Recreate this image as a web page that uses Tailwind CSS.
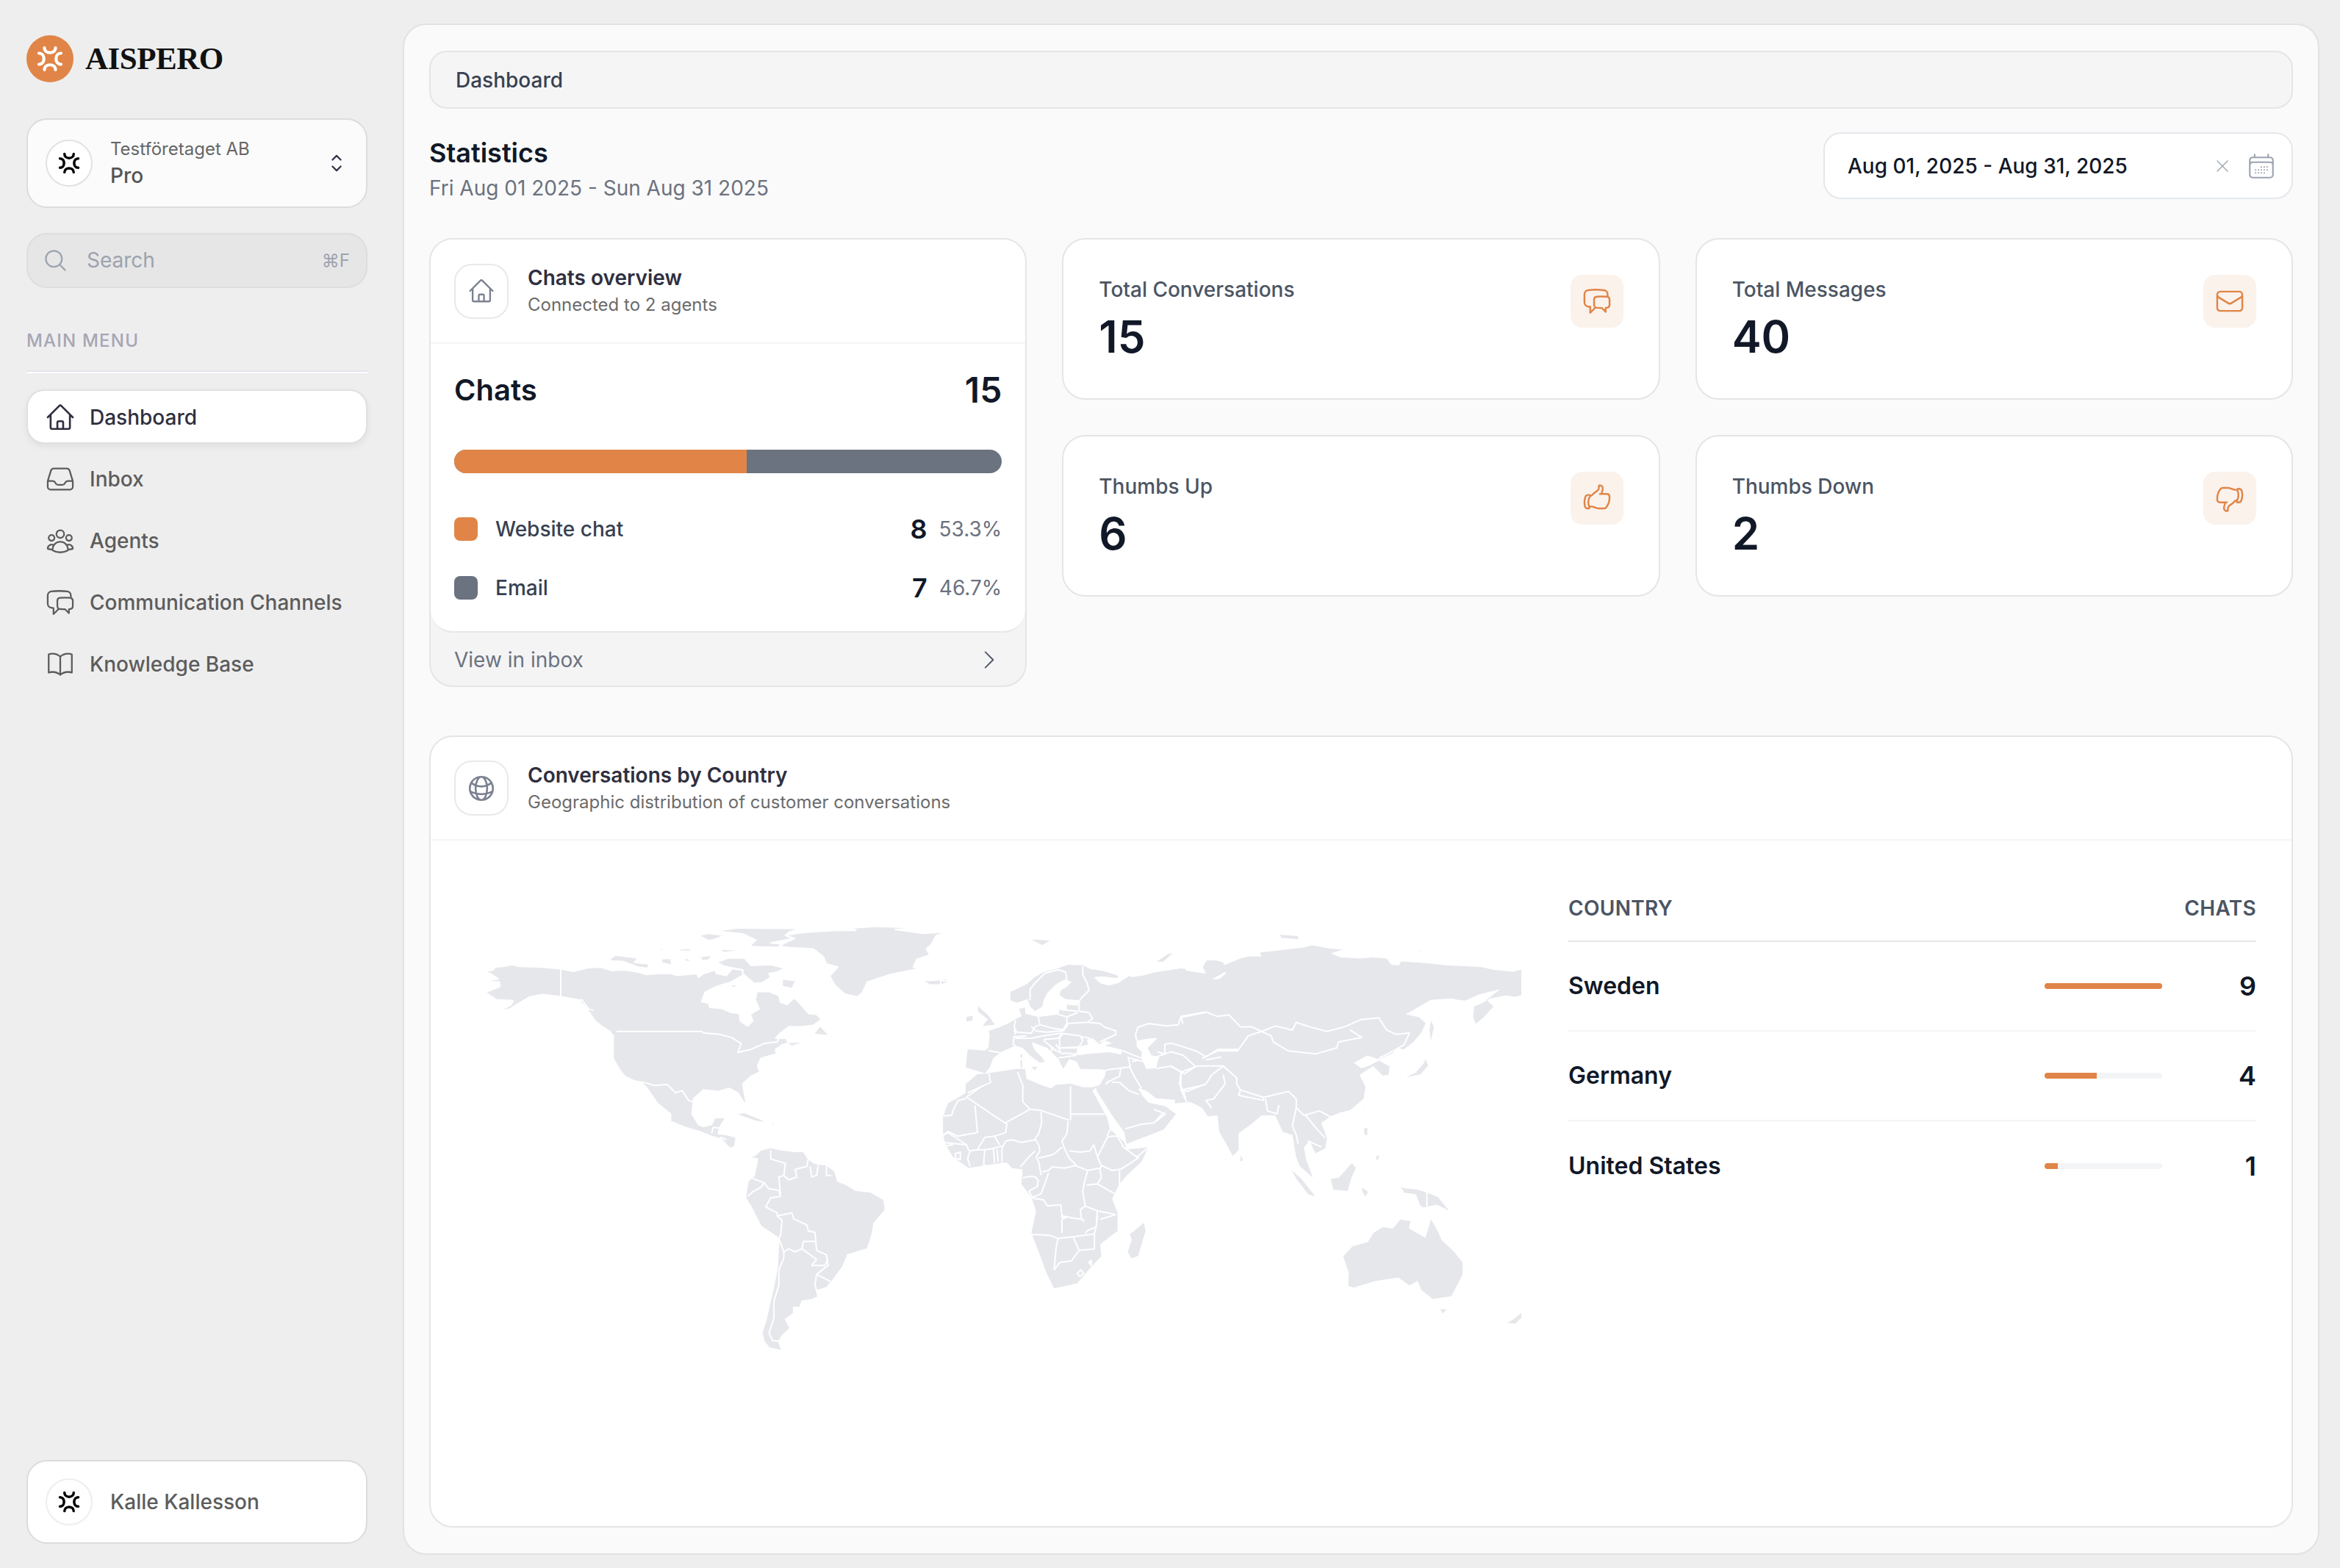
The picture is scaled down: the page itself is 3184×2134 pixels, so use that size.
<!DOCTYPE html>
<html lang="en">
<head>
  <meta charset="UTF-8" />
  <title>Aispero - Dashboard</title>
  <script src="https://cdn.jsdelivr.net/npm/@tailwindcss/browser@4"></script>
</head>
<body class="bg-[#eeeeee] font-['Inter',sans-serif] h-[2134px] flex overflow-hidden">

  <svg class="hidden">
    <symbol id="mark" viewBox="0 0 24 24"><path d="M7 2C7 8 17 8 17 2M7 22C7 16 17 16 17 22M2 7C8 7 8 17 2 17M22 7C16 7 16 17 22 17" fill="none" stroke-width="2.8" stroke-linecap="round"/></symbol>
    <symbol id="home" viewBox="0 0 24 24"><path d="m2.25 12 8.954-8.955c.44-.439 1.152-.439 1.591 0L21.75 12M4.5 9.75v10.125c0 .621.504 1.125 1.125 1.125H9.75v-4.875c0-.621.504-1.125 1.125-1.125h2.25c.621 0 1.125.504 1.125 1.125V21h4.125c.621 0 1.125-.504 1.125-1.125V9.75M8.25 21h8.25" fill="none" stroke-linecap="round" stroke-linejoin="round"/></symbol>
    <symbol id="chats" viewBox="0 0 24 24"><path d="M20.25 8.511c.884.284 1.5 1.128 1.5 2.097v4.286c0 1.136-.847 2.1-1.98 2.193-.34.027-.68.052-1.02.072v3.091l-3-3c-1.354 0-2.694-.055-4.02-.163a2.115 2.115 0 0 1-.825-.242m9.345-8.334a2.126 2.126 0 0 0-.476-.095 48.64 48.64 0 0 0-8.048 0c-1.131.094-1.976 1.057-1.976 2.192v4.286c0 .837.46 1.58 1.155 1.951m9.345-8.334V6.637c0-1.621-1.152-3.026-2.76-3.235A48.455 48.455 0 0 0 11.25 3c-2.115 0-4.198.137-6.24.402-1.608.209-2.76 1.614-2.76 3.235v6.226c0 1.621 1.152 3.026 2.76 3.235.577.075 1.157.14 1.74.194V21l4.155-4.155" fill="none" stroke-linecap="round" stroke-linejoin="round"/></symbol>
  </svg>

  <!-- sidebar -->
  <aside class="w-[548px] shrink-0 pl-[36px] pr-[48px] pt-[48px] pb-[33px] flex flex-col">
    <div class="flex items-center gap-[16px] h-[64px]">
      <div class="w-[64px] h-[64px] rounded-full bg-[#e08547] flex items-center justify-center">
        <svg class="w-[36px] h-[36px] stroke-white"><use href="#mark"/></svg>
      </div>
      <span class="font-['Liberation_Serif',serif] font-bold text-[43px] tracking-[-.5px] text-[#111111]">AISPERO</span>
    </div>

    <div class="mt-[49px] h-[122px] rounded-[28px] border-2 border-[#dcdcdc] bg-[#fbfbfb] flex items-center pl-[24px] pr-[22px]">
      <div class="w-[64px] h-[64px] rounded-full bg-white border-2 border-[#e2e2e2] flex items-center justify-center">
        <svg class="w-[30px] h-[30px] stroke-black"><use href="#mark"/></svg>
      </div>
      <div class="ml-[24px] flex-1 -mt-[2px]">
        <div class="text-[24px] leading-[36px] text-[#666666]">Testföretaget AB</div>
        <div class="text-[28px] leading-[37px] text-[#555555] font-medium">Pro</div>
      </div>
      <svg class="w-[36px] h-[36px] stroke-[#33334a]" viewBox="0 0 24 24" fill="none" stroke-width="1.5" stroke-linecap="round" stroke-linejoin="round"><path d="M8.25 15 12 18.75 15.75 15m-7.5-6L12 5.25 15.75 9"/></svg>
    </div>

    <div class="mt-[34px] h-[75px] rounded-[28px] border-2 border-[#dddddd] bg-[#e6e6e6] flex items-center pl-[20px] pr-[22px]">
      <svg class="w-[35px] h-[35px] stroke-[#9ca3af]" viewBox="0 0 24 24" fill="none" stroke-width="1.5" stroke-linecap="round" stroke-linejoin="round"><path d="m21 21-5.197-5.197m0 0A7.5 7.5 0 1 0 5.196 5.196a7.5 7.5 0 0 0 10.607 10.607Z"/></svg>
      <span class="ml-[25px] flex-1 text-[28px] leading-[36px] -mt-[1px] text-[#9ca3af]">Search</span>
      <span class="text-[24px] text-[#9ca3af]">⌘F</span>
    </div>

    <div class="mt-[56px] text-[24px] leading-[32px] font-medium tracking-[1.2px] text-[#a6a6b4]">MAIN MENU</div>
    <div class="mt-[24px] h-[4px] border-t-2 border-b-2 border-t-[#e3e3ea] border-b-white"></div>

    <nav class="mt-[22px] flex flex-col gap-[10px] text-[28px] font-medium text-[#5c5c5c]">
      <a class="h-[74px] rounded-[24px] border-2 border-[#e0e0e0] bg-white shadow-[0_4px_10px_rgba(0,0,0,0.06)] flex items-center pl-[23px] pt-[1px] gap-[19px] text-[#2f2f40]">
        <svg class="w-[42px] h-[42px] stroke-[#2f2f40]" stroke-width="1.5"><use href="#home"/></svg>
        Dashboard
      </a>
      <a class="h-[74px] border-2 border-transparent flex items-center pl-[23px] pt-[1px] gap-[19px]">
        <svg class="w-[42px] h-[42px] stroke-[#5c5c5c]" viewBox="0 0 24 24" fill="none" stroke-width="1.3" stroke-linecap="round" stroke-linejoin="round"><path d="M2.25 13.5h3.86a2.25 2.25 0 0 1 2.012 1.244l.256.512a2.25 2.25 0 0 0 2.013 1.244h3.218a2.25 2.25 0 0 0 2.013-1.244l.256-.512a2.25 2.25 0 0 1 2.013-1.244h3.859m-19.5.338V18a2.25 2.25 0 0 0 2.25 2.25h15A2.25 2.25 0 0 0 21.75 18v-4.162c0-.224-.034-.447-.1-.661L19.24 5.338a2.25 2.25 0 0 0-2.15-1.588H6.911a2.25 2.25 0 0 0-2.15 1.588L2.35 13.177a2.25 2.25 0 0 0-.1.661Z"/></svg>
        Inbox
      </a>
      <a class="h-[74px] border-2 border-transparent flex items-center pl-[23px] pt-[1px] gap-[19px]">
        <svg class="w-[42px] h-[42px] stroke-[#5c5c5c]" viewBox="0 0 24 24" fill="none" stroke-width="1.3" stroke-linecap="round" stroke-linejoin="round"><path d="M18 18.72a9.094 9.094 0 0 0 3.741-.479 3 3 0 0 0-4.682-2.72m.94 3.198.001.031c0 .225-.012.447-.037.666A11.944 11.944 0 0 1 12 21c-2.17 0-4.207-.576-5.963-1.584A6.062 6.062 0 0 1 6 18.719m12 0a5.971 5.971 0 0 0-.941-3.197m0 0A5.995 5.995 0 0 0 12 12.75a5.995 5.995 0 0 0-5.058 2.772m0 0a3 3 0 0 0-4.681 2.72 8.986 8.986 0 0 0 3.74.477m.94-3.197a5.971 5.971 0 0 0-.94 3.197M15 6.75a3 3 0 1 1-6 0 3 3 0 0 1 6 0Zm6 3a2.25 2.25 0 1 1-4.5 0 2.25 2.25 0 0 1 4.5 0Zm-13.5 0a2.25 2.25 0 1 1-4.5 0 2.25 2.25 0 0 1 4.5 0Z"/></svg>
        Agents
      </a>
      <a class="h-[74px] border-2 border-transparent flex items-center pl-[23px] pt-[1px] gap-[19px]">
        <svg class="w-[42px] h-[42px] stroke-[#5c5c5c]" stroke-width="1.3"><use href="#chats"/></svg>
        Communication Channels
      </a>
      <a class="h-[74px] border-2 border-transparent flex items-center pl-[23px] pt-[1px] gap-[19px]">
        <svg class="w-[42px] h-[42px] stroke-[#5c5c5c]" viewBox="0 0 24 24" fill="none" stroke-width="1.3" stroke-linecap="round" stroke-linejoin="round"><path d="M12 6.042A8.967 8.967 0 0 0 6 3.75c-1.052 0-2.062.18-3 .512v14.25A8.987 8.987 0 0 1 6 18c2.305 0 4.408.867 6 2.292m0-14.25a8.966 8.966 0 0 1 6-2.292c1.052 0 2.062.18 3 .512v14.25A8.987 8.987 0 0 0 18 18a8.967 8.967 0 0 0-6 2.292m0-14.25v14.25"/></svg>
        Knowledge Base
      </a>
    </nav>

    <div class="mt-auto h-[114px] rounded-[28px] border-2 border-[#dcdcdc] bg-white flex items-center pl-[24px]">
      <div class="w-[64px] h-[64px] rounded-full bg-white border-2 border-[#eeeeee] flex items-center justify-center">
        <svg class="w-[30px] h-[30px] stroke-black"><use href="#mark"/></svg>
      </div>
      <span class="ml-[24px] text-[28px] font-medium text-[#5c5c5c]">Kalle Kallesson</span>
    </div>
  </aside>

  <!-- main panel -->
  <main class="flex-1 mr-[28px] mt-[32px] mb-[18px] rounded-[32px] border-2 border-[#e2e2e2] bg-[#fafafa] px-[34px] pt-[35px] pb-[35px] flex flex-col">
    <div class="h-[79px] shrink-0 rounded-[24px] border-2 border-[#e5e5e5] bg-[#f5f5f5] flex items-center pl-[34px] text-[28px] font-medium text-[#374151]">Dashboard</div>

    <div class="mt-[32px] h-[91px] shrink-0 flex justify-between">
      <div class="pt-[4px]">
        <h1 class="text-[36px] leading-[48px] font-semibold text-[#111827]">Statistics</h1>
        <p class="mt-[4px] text-[28px] leading-[40px] text-[#6b7280]">Fri Aug 01 2025 - Sun Aug 31 2025</p>
      </div>
      <div class="w-[639px] rounded-[24px] border-2 border-[#e5e7eb] bg-white flex items-center pl-[31px] pr-[20px]">
        <span class="flex-1 text-[28px] font-medium text-[#111827]">Aug 01, 2025 - Aug 31, 2025</span>
        <svg class="w-[28px] h-[28px] stroke-[#9ca3af]" viewBox="0 0 24 24" fill="none" stroke-width="1.2" stroke-linecap="round"><path d="M6 18 18 6M6 6l12 12"/></svg>
        <svg class="ml-[18px] w-[42px] h-[42px] stroke-[#9ca3af]" viewBox="0 0 24 24" fill="none" stroke-width="1.2" stroke-linecap="round" stroke-linejoin="round"><path d="M6.75 3v2.25M17.25 3v2.25M3 18.75V7.5a2.25 2.25 0 0 1 2.25-2.25h13.5A2.25 2.25 0 0 1 21 7.5v11.25m-18 0A2.25 2.25 0 0 0 5.25 21h13.5A2.25 2.25 0 0 0 21 18.75m-18 0v-7.5A2.25 2.25 0 0 1 5.25 9h13.5A2.25 2.25 0 0 1 21 11.25v7.5m-9-6h.008v.008H12v-.008ZM12 15h.008v.008H12V15Zm0 2.25h.008v.008H12v-.008ZM9.75 15h.008v.008H9.75V15Zm0 2.25h.008v.008H9.75v-.008ZM7.5 15h.008v.008H7.5V15Zm0 2.25h.008v.008H7.5v-.008Zm6.75-4.5h.008v.008h-.008v-.008Zm0 2.25h.008v.008h-.008V15Zm0 2.25h.008v.008h-.008v-.008Zm2.25-4.5h.008v.008H16.5v-.008Zm0 2.25h.008v.008H16.5V15Z"/></svg>
      </div>
    </div>

    <div class="mt-[53px] shrink-0 grid grid-cols-3 gap-x-[48px]">
      <!-- chats overview -->
      <section class="rounded-[32px] border-2 border-[#e5e5e5] bg-[#f4f4f5] flex flex-col">
        <div class="rounded-[30px] bg-white border-b-2 border-[#e5e7eb]">
          <div class="h-[142px] border-b-2 border-[#f5f5f5] px-[32px] flex items-center gap-[26px]">
            <div class="w-[74px] h-[75px] rounded-[24px] border-2 border-[#e9e9e9] flex items-center justify-center">
              <svg class="w-[38px] h-[38px] stroke-[#7b8190]" stroke-width="1.5"><use href="#home"/></svg>
            </div>
            <div>
              <div class="text-[28px] leading-[38px] font-semibold text-[#2f2f40]">Chats overview</div>
              <div class="text-[24px] leading-[36px] text-[#6b6b6b]">Connected to 2 agents</div>
            </div>
          </div>
          <div class="px-[32px] pt-[33px] pb-[35px]">
            <div class="flex items-center justify-between h-[60px] text-[#111827] font-semibold">
              <span class="text-[40px]">Chats</span>
              <span class="text-[48px]">15</span>
            </div>
            <div class="mt-[51px] h-[32px] rounded-full overflow-hidden flex bg-[#6b7280]">
              <div class="bg-[#e08547]" style="width: 53.4%"></div>
            </div>
            <div class="mt-[52px] flex flex-col gap-[32px]">
              <div class="h-[48px] flex items-center">
                <span class="w-[32px] h-[32px] rounded-[8px] bg-[#e08547]"></span>
                <span class="ml-[24px] flex-1 text-[28px] font-medium text-[#374151]">Website chat</span>
                <span class="text-[36px] font-semibold text-[#111827]">8</span>
                <span class="ml-[16px] text-[28px] text-[#6b7280]">53.3%</span>
              </div>
              <div class="h-[48px] flex items-center">
                <span class="w-[32px] h-[32px] rounded-[8px] bg-[#6b7280]"></span>
                <span class="ml-[24px] flex-1 text-[28px] font-medium text-[#374151]">Email</span>
                <span class="text-[36px] font-semibold text-[#111827]">7</span>
                <span class="ml-[16px] text-[28px] text-[#6b7280]">46.7%</span>
              </div>
            </div>
          </div>
        </div>
        <div class="h-[72px] pt-[1px] px-[32px] flex items-center justify-between text-[28px] text-[#6b7280]">
          View in inbox
          <svg class="w-[34px] h-[34px] stroke-[#4b5563]" viewBox="0 0 24 24" fill="none" stroke-width="1.3" stroke-linecap="round" stroke-linejoin="round"><path d="m8.25 4.5 7.5 7.5-7.5 7.5"/></svg>
        </div>
      </section>

      <!-- stat cards -->
      <div class="col-span-2 grid grid-cols-2 gap-x-[48px] gap-y-[48px] content-start">
        <div class="h-[220px] rounded-[32px] border-2 border-[#e5e5e5] bg-white p-[48px] flex justify-between">
          <div>
            <div class="text-[28px] leading-[40px] font-medium text-[#4b5563]">Total Conversations</div>
            <div class="mt-[12px] text-[60px] leading-[64px] font-semibold text-[#111827]">15</div>
          </div>
          <div class="w-[72px] h-[72px] rounded-[16px] bg-[#fbf2ec] flex items-center justify-center">
            <svg class="w-[42px] h-[42px] stroke-[#e08547]" stroke-width="1.4"><use href="#chats"/></svg>
          </div>
        </div>
        <div class="h-[220px] rounded-[32px] border-2 border-[#e5e5e5] bg-white p-[48px] flex justify-between">
          <div>
            <div class="text-[28px] leading-[40px] font-medium text-[#4b5563]">Total Messages</div>
            <div class="mt-[12px] text-[60px] leading-[64px] font-semibold text-[#111827]">40</div>
          </div>
          <div class="w-[72px] h-[72px] rounded-[16px] bg-[#fbf2ec] flex items-center justify-center">
            <svg class="w-[42px] h-[42px] stroke-[#e08547]" viewBox="0 0 24 24" fill="none" stroke-width="1.4" stroke-linecap="round" stroke-linejoin="round"><path d="M21.75 6.75v10.5a2.25 2.25 0 0 1-2.25 2.25h-15a2.25 2.25 0 0 1-2.25-2.25V6.75m19.5 0A2.25 2.25 0 0 0 19.5 4.5h-15a2.25 2.25 0 0 0-2.25 2.25m19.5 0v.243a2.25 2.25 0 0 1-1.07 1.916l-7.5 4.615a2.25 2.25 0 0 1-2.36 0L3.32 8.91a2.25 2.25 0 0 1-1.07-1.916V6.75"/></svg>
          </div>
        </div>
        <div class="h-[220px] rounded-[32px] border-2 border-[#e5e5e5] bg-white p-[48px] flex justify-between">
          <div>
            <div class="text-[28px] leading-[40px] font-medium text-[#4b5563]">Thumbs Up</div>
            <div class="mt-[12px] text-[60px] leading-[64px] font-semibold text-[#111827]">6</div>
          </div>
          <div class="w-[72px] h-[72px] rounded-[16px] bg-[#fbf2ec] flex items-center justify-center">
            <svg class="w-[42px] h-[42px] stroke-[#e08547]" viewBox="0 0 24 24" fill="none" stroke-width="1.4" stroke-linecap="round" stroke-linejoin="round"><path d="M6.633 10.25c.806 0 1.533-.446 2.031-1.08a9.041 9.041 0 0 1 2.861-2.4c.723-.384 1.35-.956 1.653-1.715a4.498 4.498 0 0 0 .322-1.672V2.75a.75.75 0 0 1 .75-.75 2.25 2.25 0 0 1 2.25 2.25c0 1.152-.26 2.243-.723 3.218-.266.558.107 1.282.725 1.282m0 0h3.126c1.026 0 1.945.694 2.054 1.715.045.422.068.85.068 1.285a11.95 11.95 0 0 1-2.649 7.521c-.388.482-.987.729-1.605.729H13.48c-.483 0-.964-.078-1.423-.23l-3.114-1.04a4.501 4.501 0 0 0-1.423-.23H5.904m10.598-9.75H14.25M5.904 18.5c.083.205.173.405.27.602.197.4-.078.898-.523.898h-.908c-.889 0-1.713-.518-1.972-1.368a12 12 0 0 1-.521-3.507c0-1.553.295-3.036.831-4.398C3.387 9.953 4.167 9.5 5 9.5h1.053c.472 0 .745.556.5.96a8.958 8.958 0 0 0-1.302 4.665c0 1.194.232 2.333.654 3.375Z"/></svg>
          </div>
        </div>
        <div class="h-[220px] rounded-[32px] border-2 border-[#e5e5e5] bg-white p-[48px] flex justify-between">
          <div>
            <div class="text-[28px] leading-[40px] font-medium text-[#4b5563]">Thumbs Down</div>
            <div class="mt-[12px] text-[60px] leading-[64px] font-semibold text-[#111827]">2</div>
          </div>
          <div class="w-[72px] h-[72px] rounded-[16px] bg-[#fbf2ec] flex items-center justify-center">
            <svg class="w-[42px] h-[42px] stroke-[#e08547]" viewBox="0 0 24 24" fill="none" stroke-width="1.4" stroke-linecap="round" stroke-linejoin="round"><path d="M7.498 15.25H4.372c-1.026 0-1.945-.694-2.054-1.715a12.137 12.137 0 0 1-.068-1.285c0-2.848.992-5.464 2.649-7.521C5.287 4.247 5.886 4 6.504 4h4.016a4.5 4.5 0 0 1 1.423.23l3.114 1.04a4.5 4.5 0 0 0 1.423.23h1.294M7.498 15.25c.618 0 .991.724.725 1.282A7.471 7.471 0 0 0 7.5 19.75 2.25 2.25 0 0 0 9.75 22a.75.75 0 0 0 .75-.75v-.633c0-.573.11-1.14.322-1.672.304-.76.93-1.33 1.653-1.715a9.04 9.04 0 0 0 2.86-2.4c.498-.634 1.226-1.08 2.032-1.08h.384m-10.253 1.5H9.7m8.075-9.75c.01.05.027.1.05.148.593 1.2.925 2.55.925 3.977 0 1.487-.36 2.89-.999 4.125m.023-8.25c-.076-.365.183-.75.575-.75h.908c.889 0 1.713.518 1.972 1.368.339 1.11.521 2.287.521 3.507 0 1.553-.295 3.036-.831 4.398-.306.774-1.086 1.227-1.918 1.227h-1.053c-.472 0-.745-.556-.5-.96a8.95 8.95 0 0 0 .303-.54"/></svg>
          </div>
        </div>
      </div>
    </div>

    <!-- conversations by country -->
    <section class="mt-[66px] flex-1 rounded-[32px] border-2 border-[#e5e5e5] bg-white flex flex-col min-h-0">
      <div class="h-[141px] shrink-0 border-b-2 border-[#f5f5f5] px-[32px] flex items-center gap-[26px]">
        <div class="w-[74px] h-[75px] rounded-[24px] border-2 border-[#e9e9e9] flex items-center justify-center">
          <svg class="w-[42px] h-[42px] stroke-[#7b8190]" viewBox="0 0 24 24" fill="none" stroke-width="1.5" stroke-linecap="round" stroke-linejoin="round"><path d="M12 21a9.004 9.004 0 0 0 8.716-6.747M12 21a9.004 9.004 0 0 1-8.716-6.747M12 21c2.485 0 4.5-4.03 4.5-9S14.485 3 12 3m0 18c-2.485 0-4.5-4.03-4.5-9S9.515 3 12 3m0 0a8.997 8.997 0 0 1 7.843 4.582M12 3a8.997 8.997 0 0 0-7.843 4.582m15.686 0A11.953 11.953 0 0 1 12 10.5c-2.998 0-5.74-1.1-7.843-2.918m15.686 0A8.959 8.959 0 0 1 21 12c0 .778-.099 1.533-.284 2.253m0 0A17.919 17.919 0 0 1 12 16.5c-3.162 0-6.133-.815-8.716-2.247m0 0A9.015 9.015 0 0 1 3 12c0-1.605.42-3.113 1.157-4.418"/></svg>
        </div>
        <div>
          <div class="text-[28px] leading-[38px] font-semibold text-[#2f2f40]">Conversations by Country</div>
          <div class="text-[24px] leading-[36px] text-[#6b6b6b]">Geographic distribution of customer conversations</div>
        </div>
      </div>

      <div class="flex pl-[44px] pr-[48px] gap-[64px]">
        <!-- map: paths are in crop coordinates, each group scales them back to the page -->
        <svg class="mt-[74px] w-[1440px] h-[640px] shrink-0 [&_path]:[vector-effect:non-scaling-stroke]" viewBox="630 1220 1440 640" stroke="#ffffff" stroke-width="2" stroke-linejoin="round">
          <g transform="translate(600 1220) scale(.4464 .4082)" fill="#e5e7eb">
            <path d="M128 257 160 250 165 240 190 238 215 232 240 238 300 240 365 246 405 255 445 243 485 240 520 252 560 250 605 258 625 265 665 262 700 262 720 268 780 262 785 275 800 262 835 250 840 262 870 268 885 250 880 245 920 250 920 268 885 290 860 298 830 310 805 325 795 355 815 360 820 375 855 378 885 392 910 395 912 420 935 437 950 420 943 398 970 380 958 350 963 322 1000 322 1030 335 1035 358 1055 365 1078 343 1105 375 1120 395 1145 398 1160 415 1135 435 1095 440 1060 440 1030 465 1020 478 1050 475 1058 492 1085 490 1115 488 1070 505 1055 495 1040 500 1020 515 1022 530 990 540 975 545 965 570 972 590 945 605 920 630 930 690 925 695 905 660 880 645 845 655 800 650 770 680 765 730 785 765 800 772 825 765 835 742 868 742 850 775 845 795 875 800 900 808 895 840 880 845 905 865 935 875 880 845 855 815 825 805 790 790 745 775 700 755 700 730 660 695 625 640 610 625 590 620 560 605 540 575 525 545 525 470 515 455 490 438 470 420 445 380 420 350 370 340 310 332 270 340 240 360 210 380 175 388 215 365 220 352 170 350 135 325 180 305 178 290 125 288 175 280 150 262Z"/>
            <path d="M885 850 905 865 935 875 955 870 975 850 1005 842 1040 850 1080 855 1105 855 1120 880 1140 895 1175 900 1200 920 1210 955 1235 965 1265 985 1310 990 1350 1015 1355 1050 1320 1095 1315 1130 1300 1180 1240 1200 1225 1240 1195 1285 1175 1310 1145 1320 1150 1340 1130 1350 1100 1355 1095 1375 1075 1375 1075 1395 1050 1415 1065 1445 1040 1470 1030 1490 1040 1520 1000 1510 985 1490 978 1460 990 1420 1000 1370 1015 1300 1025 1240 1030 1145 975 1105 945 1040 928 1010 935 955 955 935 965 880 925 875Z"/>
            <path d="M835 120 905 110 1095 112 1060 125 1050 135 1075 145 1005 160 1060 165 1030 175 940 172 960 150 920 130Z"/>
            <path d="M840 225 875 210 925 210 945 235 1005 232 1050 245 1020 258 1000 262 1005 275 980 292 955 295 920 262 920 250 865 238Z"/>
            <path d="M785 135 815 128 865 135 830 150 815 152ZM850 180 930 185 860 192ZM790 205 830 200 815 218 795 218ZM740 208 775 222 745 222ZM725 180 765 178 760 188 730 188ZM710 150 745 155 715 158ZM545 175 590 167 560 178ZM590 185 640 185 660 188 600 190ZM660 172 690 185 670 185ZM510 220 530 200 600 210 590 225 635 230 630 245 600 240 555 222ZM675 212 700 212 705 235 670 225ZM880 300 915 298 890 310ZM1040 280 1075 285 1100 275 1080 290 1070 312 1040 305ZM1135 465 1155 435 1185 470 1170 468ZM75 278 85 284 75 285ZM240 368 255 368 240 373ZM440 405 448 410 442 412Z"/>
            <path d="M1105 125 1200 118 1265 118 1250 110 1330 105 1470 110 1385 115 1470 128 1560 122 1510 135 1495 165 1480 180 1490 200 1450 215 1440 240 1460 245 1370 265 1300 290 1285 325 1270 340 1230 330 1200 300 1185 270 1210 240 1175 230 1165 205 1135 180 1060 175 1030 170 1078 145 1050 135Z"/>
            <path d="M1465 285 1500 285 1540 280 1550 290 1520 300 1490 300ZM895 730 925 725 970 745 1000 760 960 755ZM1005 758 1030 765 1010 768Z"/>
            <path fill="none" d="M365 246 365 340M370 340 400 352 430 350 450 380 465 385M535 455 795 455 800 460 850 465 885 475 915 495 905 525 945 515 985 495 1025 490 1030 478 1050 478M590 622 620 625 650 635 690 632 715 660 735 652 755 685 770 690M610 630 635 680 655 715M825 795 830 775 850 778 850 800M850 808 870 815M1005 850 1005 880 1050 895 1045 935 1030 940 1035 1000M950 945 985 960 1000 980 1030 985 1035 1005 1005 1010 990 1040 1025 1060 1025 1070 1070 1060 1075 1080 1115 1100 1120 1120 1140 1125 1145 1185 1175 1200 1180 1235 1145 1265 1140 1300 1145 1320M935 1005 950 990 975 975 985 960M1120 880 1115 905 1080 915 1085 940 1060 950 1045 935M1125 905 1130 940 1145 935 1150 900M1175 900 1175 935 1190 935M1025 1070 1040 1085 1035 1135 1030 1145 1045 1190 1060 1180 1080 1190 1100 1180 1105 1155 1140 1155M1100 1180 1145 1215 1130 1235 1170 1235 1180 1215M1045 1190 1045 1210 1030 1250 1030 1300 1015 1355 1015 1410 1000 1460 1010 1485 1040 1490M1145 1265 1190 1290"/>
          </g>

          <!-- land fills for the old world, no stroke so the overlaps do not show -->
          <g transform="translate(1280 1220) scale(.523 .4082)" fill="#e5e7eb">
            <path stroke="none" d="M600 262 610 260 630 250 655 256 690 262 682 240 692 218 715 218 735 225 742 255 705 282 725 280 742 262 735 235 780 212 800 205 835 205 830 192 880 185 945 175 965 168 1010 178 1045 182 1015 195 1040 208 1090 212 1125 208 1160 212 1172 232 1192 235 1198 222 1250 226 1320 235 1405 240 1440 250 1490 256 1520 245 1520 330 1495 340 1470 335 1450 340 1430 345 1410 360 1388 372 1385 405 1392 430 1415 405 1438 372 1420 350 1455 315 1420 325 1400 332 1365 352 1345 350 1330 345 1275 350 1210 398 1245 408 1262 428 1250 460 1230 490 1205 515 1190 510 1175 528 1140 548 1110 535 1075 560 1095 578 1118 568 1140 552 1168 572 1165 600 1150 602 1125 570 1090 600 1105 640 1100 680 1065 718 1040 725 1015 738 990 760 1005 810 1000 845 975 862 960 820 945 842 950 880 968 942 935 905 925 875 915 800 890 790 870 735 835 735 810 762 775 795 775 850 760 870 745 835 725 790 720 735 695 738 680 710 650 690 610 695Z"/>
            <path stroke="none" d="M404 650 446 735 478 792 484 830 555 795 580 782 612 730 585 705 540 692 525 670 516 650Z"/>
            <path stroke="none" d="M411 633 395 653 433 743 440 780 478 825 484 849 541 841 522 890 484 935 465 964 446 1013 460 1060 460 1120 415 1165 418 1205 395 1235 355 1295 295 1312 275 1260 255 1190 236 1127 248 1054 236 1009 210 964 213 915 185 911 172 892 108 903 73 911 32 874 13 833 6 800 6 739 19 694 40 680 65 660 65 630 95 598 115 596 197 580 220 580 223 613 261 633 287 645 299 633 338 629 370 641 395 641Z"/>
            <path d="M95 365 125 400 145 435 105 440 120 415 95 390ZM65 405 85 400 85 420 65 425Z"/>
            <path d="M0 125 30 122 0 132ZM0 285 25 290 0 300ZM225 145 290 150 265 170ZM295 138 345 138 315 142ZM880 130 930 135 935 150 885 145ZM940 150 970 155 945 158ZM1240 183 1290 188 1245 190ZM555 225 590 195 680 175 610 190 580 225Z"/>
            <path d="M490 1130 510 1110 530 1088 535 1120 515 1205 495 1215 485 1190 495 1150ZM778 860 790 885 778 893ZM1180 625 1235 590 1255 560 1262 540 1270 570 1250 600 1195 615ZM1255 530 1275 515 1295 510 1265 525ZM1275 410 1285 440 1275 500 1270 450ZM1100 715 1108 705 1105 725ZM1010 765 1020 755 1020 765ZM1100 775 1112 775 1112 805 1100 800ZM1130 870 1145 865 1135 895ZM1012 945 1035 940 1070 890 1082 910 1070 945 1060 990 1020 985ZM905 905 940 945 980 1010 955 1000 925 950ZM985 1020 1055 1042 1000 1030ZM1095 970 1115 990 1105 1010 1095 990ZM1190 965 1205 975 1240 980 1265 990 1295 1005 1310 1030 1330 1060 1290 1035 1255 1045 1245 1035 1235 1000 1205 995ZM1297 1378 1320 1380 1305 1400ZM1515 1385 1515 1408 1495 1432 1470 1428 1490 1412Z"/>
            <path d="M1045 1205 1070 1170 1110 1155 1125 1125 1150 1105 1175 1110 1195 1080 1225 1085 1220 1110 1260 1140 1275 1075 1295 1120 1305 1150 1335 1185 1360 1225 1360 1265 1330 1340 1280 1350 1250 1320 1240 1290 1220 1305 1190 1278 1130 1290 1075 1312 1058 1305 1060 1260Z"/>
          </g>

          <!-- europe and west asia, traced at 1:3 -->
          <g transform="translate(1340 1300) scale(.3333)" fill="#e5e7eb">
            <path stroke="none" d="M105 155 170 125 205 95 240 75 290 62 340 45 400 47 430 62 490 72 545 90 540 100 480 92 445 95 470 120 505 130 545 120 590 90 600 95 640 90 700 75 800 60 820 62 820 600 700 590 660 560 630 548 625 560 650 610 490 610 470 565 452 548 470 535 490 500 495 475 470 472 390 470 375 440 345 430 320 470 300 430 255 385 205 365 190 362 205 395 235 425 245 440 225 445 190 420 155 385 125 375 70 400 35 425 20 465 0 488 -39 476 -78 464 -70 390 0 395 15 385 20 330 15 315 60 300 95 285 130 265 150 255 140 225 165 220 165 245 220 258 300 248 305 228 335 228 335 205 385 205 385 190 330 185 305 170 310 150 335 135 355 115 325 105 290 125 255 160 240 190 235 215 205 235 185 215 175 185 130 200 105 190Z"/>
            <path fill="#ffffff" stroke="none" d="M380 415 375 395 395 375 420 372 418 350 440 345 470 370 490 355 520 365 490 375 560 392 557 412 510 402 430 408ZM620 355 680 345 705 345 680 370 665 385 680 415 712 420 705 445 700 468 660 470 640 430 640 400 620 380Z"/>
            <path stroke="none" d="M146 410 152 410 152 425 146 425ZM146 435 152 435 152 465 146 465ZM190 462 215 462 205 475Z"/>
            <path fill="none" d="M185 190 185 145 205 120 245 80 300 65 330 75 335 110M400 50 400 85 418 120 425 150 395 180 385 195 385 235 425 240 440 265 420 280 470 285 490 300 535 315 535 330 470 360M335 205 385 210M310 228 380 235M335 258 380 240M335 258 335 285 420 280M218 258 225 290 205 298M225 290 280 305 320 310 335 285 335 258 300 248M125 270 120 300 130 320 190 325 205 298M120 310 125 330M120 335 115 370 125 375M120 340 170 335M190 298 210 315 250 320 320 315M125 345 190 345 240 335 310 325M240 350 300 345 320 325M310 325 390 335 400 355 385 380 305 385 305 345 320 325M340 290 320 315M395 340 430 345M310 385 385 385 375 410 320 405M240 355 290 395 320 410M270 375 275 400M290 370 310 400M300 425 375 415M15 395 70 405M560 395 610 415 650 430M590 425 645 440M600 440 625 435M585 420 595 465M495 475 590 462M590 460 610 500 640 550M555 470 550 500 500 525 495 535M520 525 550 525 590 560 630 575M615 330 625 300 670 285 740 295 790 290 800 260 900 240M615 330 620 355M735 370 760 365 810 380 870 400 900 420M735 370 735 410 705 400M705 420 760 400 810 415 860 460 815 490 760 460 720 465 700 470M800 490 795 530 810 560 820 590M810 555 900 535"/>
          </g>

          <!-- africa borders, traced at 1:3 -->
          <g transform="translate(1280 1480) scale(.3333)" fill="none">
            <path d="M105 45 170 0M105 45 260 150 270 155 265 190 220 205 240 240M140 80 150 190 70 205 30 185 5 205M105 50 70 60 50 100 45 120 10 122M265 150 365 95 410 100 525 140M335 0 335 65 365 95M530 0 530 140M530 115 670 115M410 105 412 150 400 195 385 215 400 240 405 265M520 145 515 195 495 225 505 255 525 295 555 325M265 225 290 220 330 230 385 220M265 225 250 255 250 315M385 265 360 290 325 330M220 205 180 210 150 260 120 265 110 295 120 330M180 260 175 320 185 325M215 255 220 315M230 260 235 310M250 245 215 255 180 260 150 260M5 205 30 190 60 210 105 240 115 265M10 230 50 235 105 240M15 245 50 240M60 275 80 270 80 300 60 295ZM405 265 390 290 400 310 410 365M400 295 460 280 495 250M415 350 440 345 455 330 505 335 550 325 600 345 650 335 660 325M335 375 360 370 385 370 398 385 395 410 360 430 375 455 410 440 425 400 440 355M375 458 420 465 435 490 490 485 495 530 545 540 580 545 585 555M600 345 585 400 580 430 590 490 570 505 575 545M590 490 640 510 635 560M595 405 640 400 710 440M650 335 655 375 640 400M730 345 730 405M660 325 700 345 735 340 790 305 810 290M740 245 800 290 850 250M525 265 570 270 610 265 625 240 640 290 655 325M640 290 680 210 700 205 720 205 745 245M680 205 690 180 710 175M640 510 715 525M715 525 650 545M490 535 515 535 495 545 495 600M640 530 635 575 600 590 590 600"/>
          </g>

          <!-- remaining borders -->
          <g transform="translate(1280 1220) scale(.523 .4082)" fill="none">
            <path d="M1265 990 1265 1045M630 430 625 405 690 390 720 405 750 400 780 440 810 440 835 455 870 437 915 450 925 425 960 440 1005 455 1050 440 1095 415 1140 410 1160 450 1185 465 1220 460 1205 500 1185 515 1140 545M835 455 860 470 865 490 905 520 975 530 1030 510 1035 490 1095 475 1065 450M835 455 800 470 775 515 720 515 690 540M680 545 720 520 775 520M690 550 730 540M600 570 625 590 625 650 640 690M625 590 670 570 735 570 705 600 690 630 640 655 625 650M735 600 740 630 710 680 690 685 705 710M735 570 770 610 770 630 780 650 840 675 905 655 925 680 925 710 945 735M780 650 775 668 840 685 840 672M845 680 850 720 875 730 880 700M925 710 915 770 925 800 930 830M945 735 985 720 1015 740M950 735 975 775 1000 810M955 820 990 840M480 780 520 765 555 760 585 730 555 715M555 760 580 725M125 595 130 625 70 660M200 590 215 640M235 1132 285 1135 305 1145 300 1180 295 1250M305 1145 345 1140 360 1185 340 1220 310 1225 295 1250M345 1140 400 1130 400 1180 360 1185M405 1100 400 1130M355 1262 365 1250 372 1262 362 1272ZM385 1225 392 1218 392 1235Z"/>
          </g>
        </svg>

        <!-- country table -->
        <div class="flex-1 mt-[73px]">
          <div class="h-[65px] pb-[26px] border-b-2 border-[#e5e7eb] flex justify-between items-center text-[28px] font-semibold tracking-[.3px] text-[#4b5563]">
            <span>COUNTRY</span><span>CHATS</span>
          </div>
          <div class="h-[122px] border-b-2 border-[#f3f4f6] flex items-center">
            <span class="flex-1 text-[32px] font-semibold text-[#111827]">Sweden</span>
            <div class="w-[160px] h-[8px] rounded-full bg-[#f3f4f6] overflow-hidden"><div class="h-full bg-[#e08547]" style="width: 100%"></div></div>
            <span class="w-[128px] text-right text-[36px] font-semibold text-[#111827]">9</span>
          </div>
          <div class="h-[122px] border-b-2 border-[#f3f4f6] flex items-center">
            <span class="flex-1 text-[32px] font-semibold text-[#111827]">Germany</span>
            <div class="w-[160px] h-[8px] rounded-full bg-[#f3f4f6] overflow-hidden"><div class="h-full bg-[#e08547]" style="width: 44.4%"></div></div>
            <span class="w-[128px] text-right text-[36px] font-semibold text-[#111827]">4</span>
          </div>
          <div class="h-[122px] flex items-center">
            <span class="flex-1 text-[32px] font-semibold text-[#111827]">United States</span>
            <div class="w-[160px] h-[8px] rounded-full bg-[#f3f4f6] overflow-hidden"><div class="h-full bg-[#e08547]" style="width: 11.1%"></div></div>
            <span class="w-[128px] text-right text-[36px] font-semibold text-[#111827]">1</span>
          </div>
        </div>
      </div>
    </section>
  </main>

</body>
</html>
